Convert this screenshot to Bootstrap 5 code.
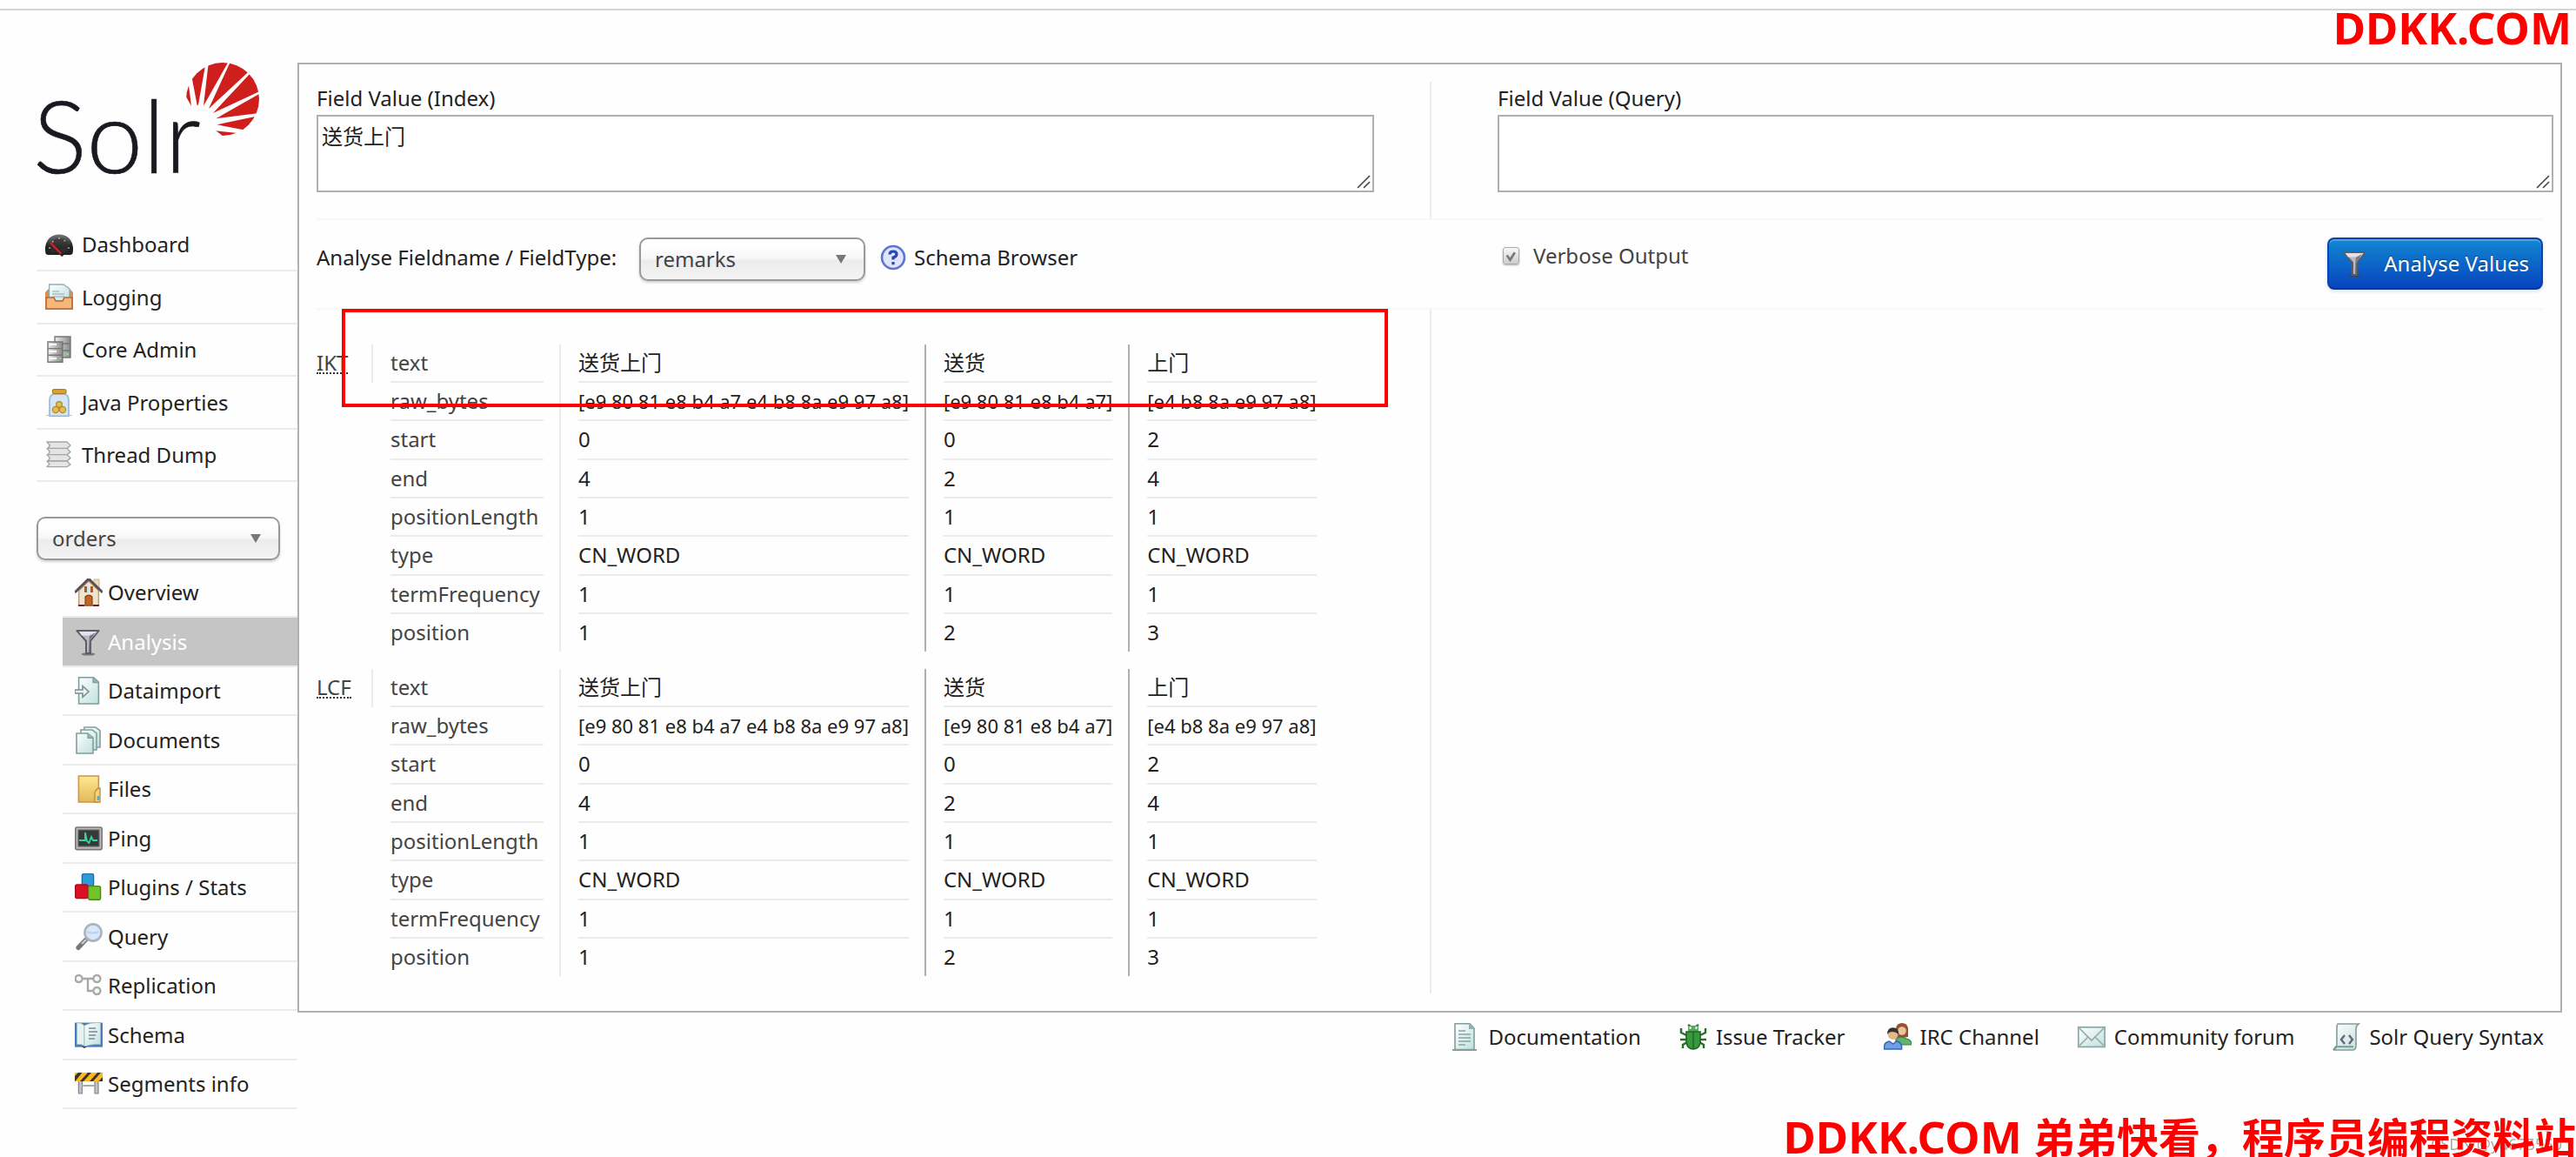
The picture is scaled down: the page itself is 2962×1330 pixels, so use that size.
<!DOCTYPE html>
<html lang="en">
<head>
<meta charset="utf-8">
<meta name="viewport" content="width=device-width, initial-scale=1">
<title>Solr Admin</title>
<link href="https://cdn.jsdelivr.net/npm/bootstrap@5.3.0/dist/css/bootstrap.min.css" rel="stylesheet">
<style>
body{background:#fefefe;color:#222;font:24px/36px "Noto Sans","Noto Sans CJK SC",sans-serif;overflow-x:hidden}
a{color:#222;text-decoration:none}
.topline{height:12px;border-bottom:2px solid #d5d5d5}
.side{width:342px;flex:none;padding:60px 0 0 42px}
.logo{height:180px}
.logo svg{overflow:visible}
.logo text{font-family:Lato,sans-serif;font-weight:300;font-size:116px;fill:#1b1820;stroke:#1b1820;stroke-width:.6}
.ico{width:32px;height:32px;flex:none;display:block}
.menu li{height:60px;border-bottom:2px solid #ebebeb}
.menu li:nth-child(even){height:61px}
.menu a{padding-left:10px;gap:10px}
.submenu{margin:10px 0 0 30px}
.submenu li{height:56px;border-bottom:2px solid #ebebeb}
.submenu li:nth-child(even){height:57px}
.submenu a{padding-left:14px;gap:6px}
.submenu .current{background:#c5c5c5}
.submenu .current a{color:#fff}
.chosen{height:50px;border:2px solid #999;border-radius:10px;padding:0 44px 0 16px;font-size:24px;line-height:36px;color:#444;box-shadow:0 2px 3px rgba(0,0,0,.18);
 background:url("data:image/svg+xml,%3Csvg xmlns='http://www.w3.org/2000/svg' width='12' height='10'%3E%3Cpath d='M0 0h12L6 10z' fill='%23777'/%3E%3C/svg%3E") no-repeat right 20px center/12px 10px,linear-gradient(#fff 20%,#f6f6f6 50%,#ececec 52%,#f3f3f3)}
.core{width:280px;margin-top:40px}
.fieldpick{width:260px}
.stage{margin:60px 16px 0 0}
.panel{border:2px solid #b0b0b0;padding:20px}
.split>*{width:50%}
.split>*+*{border-left:2px solid #ebebeb;padding-left:76px}
.fields,.options{border-bottom:2px solid #f8f8f8}
.fields{height:159px}
.fields label{line-height:38px}
.fields textarea{width:95%;height:89px;border:2px solid #b0b0b0;border-radius:0;padding:6px 4px;font-size:24px;line-height:34px;color:#222;resize:none;
 background:#fff url("data:image/svg+xml,%3Csvg xmlns='http://www.w3.org/2000/svg' width='16' height='16'%3E%3Cpath d='M1 15L15 1M8 15l7-7' stroke='%23444' stroke-width='1.6'/%3E%3C/svg%3E") no-repeat right 2px bottom 2px}
.fields>*+* textarea{width:calc(100% + 12px)}
.options{height:103px;padding-top:20px}
.options>*{width:50%}
.options label,.schemalink{line-height:46px}
.options .picklabel{width:363px}
.options .verbose label{line-height:42px}
.verbose{padding-left:84px;gap:16px;color:#444}
.tick{appearance:none;width:19px;height:20px;border:1px solid #aaa;border-radius:3px;margin:11px 0 0;box-shadow:0 1px 2px rgba(0,0,0,.3);
 background:url("data:image/svg+xml,%3Csvg xmlns='http://www.w3.org/2000/svg' viewBox='0 0 16 16'%3E%3Cpath d='M3.500 7l3.500 5 5-8' fill='none' stroke='%23777' stroke-width='2.500'/%3E%3C/svg%3E") center/17px,linear-gradient(#f8f8f8,#ccc)}
.btn-analyse{height:60px;min-width:248px;padding:0 14px;font-size:24px;line-height:36px;color:#fff;border:2px solid #0a43b4;border-bottom-color:#0a368f;border-radius:8px;background:linear-gradient(#1187d3,#0745bd);box-shadow:inset 0 2px 0 rgba(255,255,255,.25),0 2px 4px rgba(0,0,0,.12);text-shadow:0 -1px 1px rgba(0,0,0,.4)}
.btn-analyse:hover{color:#fff}
.results>*:first-child{padding:40px 0 20px}
.tokens{border-collapse:separate;border-spacing:0;line-height:42px;margin-bottom:20px}
.tokens:last-child{margin-bottom:0}
.tokens th,.tokens td{font-weight:400;padding:0 18px 0 20px;white-space:nowrap;vertical-align:top}
.tokens th{color:#444}
.tokens .stepname{width:65px;padding:0}
.tokens tr:first-child .stepname{border-right:2px solid #ebebeb}
.tokens td{border-left:2px solid #b0b0b0}
.tokens th+td{border-left-color:#ebebeb}
.tokens div{height:44px;border-bottom:2px solid #ebebeb}
.tokens tr:nth-child(3n) div{height:45px}
.tokens tr:last-child div{height:43px;border:0}
.namecol{width:214px}.c1{width:418px}.c2{width:234px}.c3{width:230px}
.tokens .bytes{font-size:22px}
.tokens abbr{text-decoration:none;border-bottom:2px dotted #333;display:inline-block;line-height:22px}
.callout{position:absolute;left:49px;top:281px;width:1203px;height:113px;border:4px solid #f00;pointer-events:none}
.links{gap:44px;padding:10px 21px 0 0}
.links a{gap:10px}
.stamp{position:fixed;right:5px;top:6px;color:#f00;font-weight:700;font-size:51px;line-height:50px;z-index:3;white-space:nowrap}
.stamp-low{right:0;top:auto;bottom:-3px}
.stamp-cjk{font-size:48px}
.credit{position:fixed;right:16px;bottom:2px;color:#aaa;font-size:18px;line-height:26px;z-index:2}
</style>
<script src="https://cdn.jsdelivr.net/npm/bootstrap@5.3.0/dist/js/bootstrap.bundle.min.js"></script>
</head>
<body>
<svg width="0" height="0" class="position-absolute" aria-hidden="true">
<defs>
<linearGradient id="gp" x2="1" y2="1"><stop stop-color="#fff"/><stop offset="1" stop-color="#bfe0dd"/></linearGradient>
<linearGradient id="gm" x2="1"><stop stop-color="#eee"/><stop offset="1" stop-color="#888"/></linearGradient>
<linearGradient id="gy" x2="0" y2="1"><stop stop-color="#ffe890"/><stop offset="1" stop-color="#e3b85c"/></linearGradient>
<linearGradient id="gk" x2="0" y2="1"><stop stop-color="#777"/><stop offset=".6" stop-color="#222"/></linearGradient>
<symbol id="funnel" viewBox="0 0 16 16"><ellipse cx="7.700" cy="15" rx="4" ry=".8" fill="#444" opacity=".6"/><path d="M1.200 1.500h12.600L9 7.500v7H6.500v-7z" fill="#b9b9c6" stroke="#5c5c62" stroke-width="1" stroke-linejoin="round"/><path d="M2.300 2h10.400L11 4.200H4z" fill="#e2e2ee"/><path d="M8.400 4.500L12 2.500 8.700 7v7h-.8z" fill="#77777f"/></symbol>
</defs>
</svg>

<div class="topline"></div>
<div class="d-flex">
<aside class="side">
<a href="#" class="logo d-block" aria-label="Apache Solr">
<svg width="260" height="140" viewBox="0 0 260 140">
<clipPath id="sun"><circle cx="214" cy="42" r="42"/></clipPath>
<text x="-4" y="127">Solr</text>
<g clip-path="url(#sun)"><g transform="translate(-42 -72) scale(.3333)" fill="#cf1f1c"><path d="M660 365L640 330 620 320 650 285zM680 362L658 247 712 205 684 362zM702 365L721 203 800 192zM720 375L804 193 875 231zM735 390L879 236 913 307zM745 409L915 312 900 389zM748 430L900 398 852 450zM745 451L826 460 783 480z"/></g></g>
</svg></a>
<ul class="menu list-unstyled mb-0">
<li><a href="#" class="d-flex align-items-center h-100"><svg class="ico" viewBox="0 0 16 16"><path d="M.2 13C-1 6 3 2.200 8 2.200S17 6 15.800 13q-.3 1-1.500 1H1.700Q.4 14 .2 13z" fill="url(#gk)"/><path d="M3 12.500Q1.500 5 8 4.500t5 8z" fill="#333" opacity=".6"/><path d="M2 10h1M4 6l.7.7M8 4v1M11.500 5.500l-.7.700M13 10h1" stroke="#aaa" stroke-width=".8"/><path d="M3 7l6.700 7" stroke="#d6202b" stroke-width="1"/><circle cx="9.600" cy="14" r=".9" fill="#222"/></svg>Dashboard</a></li>
<li><a href="#" class="d-flex align-items-center h-100"><svg class="ico" viewBox="0 0 16 16"><path d="M0 5l2-2h12l2 2v10H0z" fill="#d98e4b"/><path d="M2.300.5h8.200L14 3v7H2.300z" fill="url(#gp)" stroke="#8ab3b3" stroke-width=".7"/><path d="M4 4.500h4M4 6h7M4 7.500h7" stroke="#8aa" stroke-width=".6"/><path d="M.5 8h4.500l1 2h4l1-2h4.500v6.500H.5z" fill="#f3b777" stroke="#b86a35" stroke-width=".8"/></svg>Logging</a></li>
<li><a href="#" class="d-flex align-items-center h-100"><svg class="ico" viewBox="0 0 16 16"><g stroke="#777" stroke-width=".7" fill="url(#gm)"><path d="M5.500.5h9v4h-9zM5.500 4.500h9v4h-9zM5.500 8.500h9v4h-9z"/><path d="M1.500 3.500h8.500v3.800H1.500zM1.500 7.300h8.500v3.800H1.500zM1.500 11.100h8.500v4H1.500z"/></g><path d="M2.500 5h4M2.500 9h4M2.500 13h4" stroke="#fff"/><path d="M12 10.500h1.500M8 13h1.200" stroke="#8d9"/></svg>Core Admin</a></li>
<li><a href="#" class="d-flex align-items-center h-100"><svg class="ico" viewBox="0 0 16 16"><ellipse cx="8" cy="15.300" rx="7.500" ry=".7" fill="#999" opacity=".6"/><path d="M4.500 3h7q2 1 2 3.500V15q0 .7-1 .7h-9q-1 0-1-.7V6.500Q2.500 4 4.500 3z" fill="#d4e6f5" stroke="#96b8d4" stroke-width=".8"/><rect x="4.200" y=".3" width="7.800" height="2.500" rx=".7" fill="#d9a238" stroke="#a87216" stroke-width=".5"/><g fill="#e5bd55" stroke="#b48828" stroke-width=".6"><circle cx="8" cy="9" r="1.700"/><circle cx="6" cy="12" r="1.800"/><circle cx="10" cy="12" r="1.800"/></g></svg>Java Properties</a></li>
<li><a href="#" class="d-flex align-items-center h-100"><svg class="ico" viewBox="0 0 16 16"><g fill="#e4e4e4" stroke="#a5a5a5" stroke-width=".7" stroke-linejoin="round"><path d="M1 .5h11.500l2 2-2 1.700H1.500l1.200-1.700zM1 4.200h11.500l2 2-2 1.600H1.500l1.200-1.600zM1 7.800h11.500l2 2-2 1.700H1.500l1.200-1.700z"/><path d="M1 11.500h11.500l2 2-2 1.300H1l1.500-1.500z"/></g></svg>Thread Dump</a></li>
</ul>
<select class="form-select chosen core" aria-label="Core"><option>orders</option></select>
<ul class="submenu list-unstyled mb-0">
<li><a href="#" class="d-flex align-items-center h-100"><svg class="ico" viewBox="0 0 16 16"><path d="M11 .5h3V6h-3z" fill="#eadbc5" stroke="#c9b497" stroke-width=".5"/><path d="M2.300 7L8 1.500 13.700 7v8.500H2.300z" fill="#f2e3cd" stroke="#b69c7c" stroke-width=".7"/><path d="M0 8L7.500.7h1L16 8" fill="none" stroke="#5d5055" stroke-width="1.500"/><path d="M5.500 4.500h5V8h-5z" fill="#a75d2c"/><path d="M7 4.500h2V8H7z" fill="#cfe4f0"/><path d="M6 15.500v-5q2-2 4 0v5z" fill="#c0652a" stroke="#874019" stroke-width=".6"/><path d="M2 15.500h3.500M10.500 15.500H14" stroke="#7a1c2c" stroke-width="1"/></svg>Overview</a></li>
<li class="current"><a href="#" class="d-flex align-items-center h-100" aria-current="page"><svg class="ico"><use href="#funnel"/></svg>Analysis</a></li>
<li><a href="#" class="d-flex align-items-center h-100"><svg class="ico" viewBox="0 0 16 16"><path d="M2.300.4h8.500L13.700 3v12.500H2.300z" fill="url(#gp)" stroke="#7f9f9d" stroke-width=".8"/><path d="M10.500.5V3.300h3" fill="#8fb0ae" stroke="#7f9f9d" stroke-width=".6"/><path d="M0 7.500h4.500V5.300L8 8.500l-3.500 3.200V9.500H0z" fill="#e8f2f1" stroke="#7d8f8e" stroke-width=".8"/></svg>Dataimport</a></li>
<li><a href="#" class="d-flex align-items-center h-100"><svg class="ico" viewBox="0 0 16 16"><g fill="url(#gp)" stroke="#7f9f9d" stroke-width=".8"><path d="M5.500.5h6.500l2.500 2v9.500h-9z"/><path d="M3.500 2h6.500l2.500 2v9.500h-9z"/><path d="M1 4h6.500L10.500 6.500v9H1z"/></g><path d="M7.500 4v2.700h3" fill="#9dbab8" stroke="#7f9f9d" stroke-width=".6"/></svg>Documents</a></li>
<li><a href="#" class="d-flex align-items-center h-100"><svg class="ico" viewBox="0 0 16 16"><path d="M2.200.5h11.500v15H2.200z" fill="url(#gy)" stroke="#c7994a" stroke-width=".8"/><path d="M11.500 15.500V10q1-2.500 3-2.500v8z" fill="#f4d684" stroke="#c08e3c" stroke-width=".7"/><path d="M12.800 12h1.300v2.500h-1.300z" fill="#43b4e8"/></svg>Files</a></li>
<li><a href="#" class="d-flex align-items-center h-100"><svg class="ico" viewBox="0 0 16 16"><rect x=".4" y="1.500" width="15.200" height="12.800" rx=".8" fill="#bbb" stroke="#777" stroke-width=".8"/><rect x="2" y="3" width="12" height="9.500" fill="#343a3c" stroke="#666" stroke-width=".6"/><path d="M2.500 9H6V4.500L7 9.500l1.200 1L9.500 7l1 2H13" fill="none" stroke="#36d39a" stroke-width=".9"/></svg>Ping</a></li>
<li><a href="#" class="d-flex align-items-center h-100"><svg class="ico" viewBox="0 0 16 16"><rect x="4.200" y=".2" width="6.600" height="7" rx="1" fill="#2f9ad8" stroke="#1c6ea8" stroke-width=".7"/><rect x=".3" y="6.500" width="7.200" height="7.800" rx="1" fill="#dc1022" stroke="#a30c18" stroke-width=".7"/><rect x="7.800" y="7.300" width="7" height="7.800" rx="1" fill="#73c32b" stroke="#47891a" stroke-width=".7"/></svg>Plugins / Stats</a></li>
<li><a href="#" class="d-flex align-items-center h-100"><svg class="ico" viewBox="0 0 16 16"><path d="M6.500 9.500L2 14.200" stroke="#77777f" stroke-width="2.600" stroke-linecap="round"/><path d="M6.500 9.500L4 12" stroke="#c9c9d0" stroke-width="1.200"/><circle cx="10.500" cy="5.500" r="4.800" fill="#d7e8fa" stroke="#adb4bd" stroke-width="1.300"/><path d="M6.800 5q3.500 1.500 7 0" stroke="#b9d3ee" fill="none"/></svg>Query</a></li>
<li><a href="#" class="d-flex align-items-center h-100"><svg class="ico" viewBox="0 0 16 16"><g fill="#f8f8f8" stroke="#a9a9a9" stroke-width="1.200"><path d="M4.500 4h6M7.500 4v7h3" fill="none"/><circle cx="2.300" cy="4" r="2"/><circle cx="12.700" cy="4" r="2"/><circle cx="12.700" cy="11" r="2"/></g></svg>Replication</a></li>
<li><a href="#" class="d-flex align-items-center h-100"><svg class="ico" viewBox="0 0 16 16"><path d="M0 .8h16v14H0z" fill="#4a78bd"/><path d="M1.200.8Q4 .8 5.500 2.500V14Q4 13 1.200 13.300z" fill="#e7f3f1" stroke="#9bb" stroke-width=".4"/><path d="M5.500 2.500Q9 .5 14.800.8v12.500Q9 13 5.500 14.500z" fill="url(#gp)" stroke="#9bb" stroke-width=".4"/><path d="M8 4h4M8 6h5M8 8h4M8 10h3.500" stroke="#789" stroke-width=".8"/><path d="M4 14.500h3l-1.500 1z" fill="#333"/></svg>Schema</a></li>
<li><a href="#" class="d-flex align-items-center h-100"><svg class="ico" viewBox="0 0 16 16"><path d="M2.200 6h2v7.500h-2zM11.500 6h2v7.500h-2z" fill="#c2c2c8" stroke="#85858d" stroke-width=".6"/><path d="M4 9h7.500" stroke="#aaa"/><path d="M0 1.500h16v5H0z" fill="#fbb81f"/><path d="M0 6.500V3.500l2-2h2.200l-4 5zM3 6.500l4.500-5h2l-4.500 5zM8.500 6.500l4.500-5h2l-4.500 5zM13.700 6.500L16 4v2.500z" fill="#3c3428"/></svg>Segments info</a></li>
</ul>
</aside>

<div class="flex-grow-1 stage">
<main class="panel position-relative">
<form>
<div class="d-flex split fields">
<div><label class="d-block" for="fi">Field Value (Index)</label><textarea id="fi" class="d-block">送货上门</textarea></div>
<div><label class="d-block" for="fq">Field Value (Query)</label><textarea id="fq" class="d-block"></textarea></div>
</div>
<div class="d-flex options">
<div class="d-flex align-items-start">
<label for="ft" class="picklabel me-2">Analyse Fieldname / FieldType:</label>
<select id="ft" class="form-select chosen fieldpick me-3"><option>remarks</option></select>
<a href="#" class="schemalink d-flex align-items-center gap-2"><svg class="ico" viewBox="0 0 16 16"><circle cx="8" cy="8" r="6.500" fill="#dfe6fb" stroke="#5b74d6" stroke-width="1.300"/><path d="M6 6.300Q6 4.500 8 4.500t2 1.700Q10 7.300 8 8v1.300M8 10.500v1.600" fill="none" stroke="#2a45b4" stroke-width="1.600"/></svg>Schema Browser</a>
</div>
<div class="d-flex justify-content-between align-items-start">
<div class="d-flex verbose"><input id="vo" type="checkbox" class="tick" checked><label for="vo">Verbose Output</label></div>
<button type="button" class="btn btn-analyse d-flex align-items-center justify-content-between"><svg class="ico"><use href="#funnel"/></svg>Analyse Values</button>
</div>
</div>
</form>
<div class="d-flex split results">
<div>
<table class="tokens"><tbody>
<tr><th class="stepname"><abbr title="IKTokenizer">IKT</abbr></th><th class="namecol"><div>text</div></th><td class="c1"><div>送货上门</div></td><td class="c2"><div>送货</div></td><td class="c3"><div>上门</div></td></tr>
<tr><th class="stepname"></th><th><div>raw_bytes</div></th><td class="bytes"><div>[e9 80 81 e8 b4 a7 e4 b8 8a e9 97 a8]</div></td><td class="bytes"><div>[e9 80 81 e8 b4 a7]</div></td><td class="bytes"><div>[e4 b8 8a e9 97 a8]</div></td></tr>
<tr><th class="stepname"></th><th><div>start</div></th><td><div>0</div></td><td><div>0</div></td><td><div>2</div></td></tr>
<tr><th class="stepname"></th><th><div>end</div></th><td><div>4</div></td><td><div>2</div></td><td><div>4</div></td></tr>
<tr><th class="stepname"></th><th><div>positionLength</div></th><td><div>1</div></td><td><div>1</div></td><td><div>1</div></td></tr>
<tr><th class="stepname"></th><th><div>type</div></th><td><div>CN_WORD</div></td><td><div>CN_WORD</div></td><td><div>CN_WORD</div></td></tr>
<tr><th class="stepname"></th><th><div>termFrequency</div></th><td><div>1</div></td><td><div>1</div></td><td><div>1</div></td></tr>
<tr><th class="stepname"></th><th><div>position</div></th><td><div>1</div></td><td><div>2</div></td><td><div>3</div></td></tr>
</tbody></table>
<table class="tokens"><tbody>
<tr><th class="stepname"><abbr title="LowerCaseFilter">LCF</abbr></th><th class="namecol"><div>text</div></th><td class="c1"><div>送货上门</div></td><td class="c2"><div>送货</div></td><td class="c3"><div>上门</div></td></tr>
<tr><th class="stepname"></th><th><div>raw_bytes</div></th><td class="bytes"><div>[e9 80 81 e8 b4 a7 e4 b8 8a e9 97 a8]</div></td><td class="bytes"><div>[e9 80 81 e8 b4 a7]</div></td><td class="bytes"><div>[e4 b8 8a e9 97 a8]</div></td></tr>
<tr><th class="stepname"></th><th><div>start</div></th><td><div>0</div></td><td><div>0</div></td><td><div>2</div></td></tr>
<tr><th class="stepname"></th><th><div>end</div></th><td><div>4</div></td><td><div>2</div></td><td><div>4</div></td></tr>
<tr><th class="stepname"></th><th><div>positionLength</div></th><td><div>1</div></td><td><div>1</div></td><td><div>1</div></td></tr>
<tr><th class="stepname"></th><th><div>type</div></th><td><div>CN_WORD</div></td><td><div>CN_WORD</div></td><td><div>CN_WORD</div></td></tr>
<tr><th class="stepname"></th><th><div>termFrequency</div></th><td><div>1</div></td><td><div>1</div></td><td><div>1</div></td></tr>
<tr><th class="stepname"></th><th><div>position</div></th><td><div>1</div></td><td><div>2</div></td><td><div>3</div></td></tr>
</tbody></table>
</div>
<div></div>
</div>
<div class="callout"></div>
</main>
<footer class="d-flex justify-content-end links">
<a href="#" class="d-flex align-items-center"><svg class="ico" viewBox="0 0 16 16"><path d="M.5 15.500h14" stroke="#999"/><path d="M2 .4h8.500L13 3v12.300H2z" fill="url(#gp)" stroke="#7f9f9d" stroke-width=".8"/><path d="M10 .5v3h3" fill="#8fb0ae"/><path d="M4 4.500h4M4 6.500h7M4 8.500h7M4 10.500h7M4 12.500h4" stroke="#8aa3a2" stroke-width=".8"/></svg>Documentation</a>
<a href="#" class="d-flex align-items-center"><svg class="ico" viewBox="0 0 16 16"><path d="M1 3v2.500l3 1.500M15 3v2.500l-3 1.500M.5 9.500H4M15.500 9.500H12M2 14.500v-2l2.500-1.500M14 14.500v-2l-2.500-1.500M5 1l1.500 1M11 1L9.500 2" fill="none" stroke="#2b6e2b" stroke-width="1.200"/><path d="M5 1.500h6V5H5z" fill="#58a957"/><path d="M4 5h8v6.500Q11 15 8 15t-4-3.500z" fill="#38983c" stroke="#1f6524" stroke-width=".8"/><path d="M8 5.500V15" stroke="#1f6524" stroke-width=".7"/><circle cx="6.300" cy="2.800" r=".7" fill="#dff"/><circle cx="9.700" cy="2.800" r=".7" fill="#dff"/></svg>Issue Tracker</a>
<a href="#" class="d-flex align-items-center"><svg class="ico" viewBox="0 0 16 16"><path d="M7 9V3q.5-3 3.500-3T14 3v5z" fill="#9c4f2a"/><circle cx="10.500" cy="4.500" r="2.400" fill="#efc49a"/><path d="M7 12.500V9q3-2 6 0 3 .5 3 3.500z" fill="#5fb36a" stroke="#37804a" stroke-width=".6"/><circle cx="5.300" cy="6.500" r="3" fill="#e6b588"/><path d="M2 6.500Q2 2.600 5.300 2.600T8.600 6.500Q7 5 5 5T2 6.500z" fill="#333"/><path d="M.3 15q-.5-4 3-4.500l2 1.500 2-1.500q3.500.5 3 4.500z" fill="#6f9fe6" stroke="#3765b5" stroke-width=".7"/></svg>IRC Channel</a>
<a href="#" class="d-flex align-items-center"><svg class="ico" viewBox="0 0 16 16"><rect x=".4" y="2.400" width="15.200" height="11.300" fill="url(#gp)" stroke="#8ca9a8" stroke-width=".9"/><path d="M1 3l7 7 7-7M1 13l5-5M15 13l-5-5" fill="none" stroke="#94aaa9" stroke-width=".8"/></svg>Community forum</a>
<a href="#" class="d-flex align-items-center"><svg class="ico" viewBox="0 0 16 16"><path d="M3 .5h12q-1.500 1-1.500 3V13q0 2.500-2 2.500H.5q2-1 2-3.500V3Q2.500 1 3 .5z" fill="url(#gp)" stroke="#809f9d" stroke-width=".8"/><path d="M.5 15.400l1.500-1.800h10" fill="none" stroke="#7d9896"/><path d="M7 7L5 9.500 7 12M9.500 7l2 2.500-2 2.500" fill="none" stroke="#667" stroke-width="1.200"/></svg>Solr Query Syntax</a>
</footer>
</div>
</div>
<div class="stamp">DDKK.COM</div>
<div class="credit">CSDN @yu675550</div>
<div class="stamp stamp-low">DDKK.COM <span class="stamp-cjk">弟弟快看，程序员编程资料站</span></div>
</body>
</html>
